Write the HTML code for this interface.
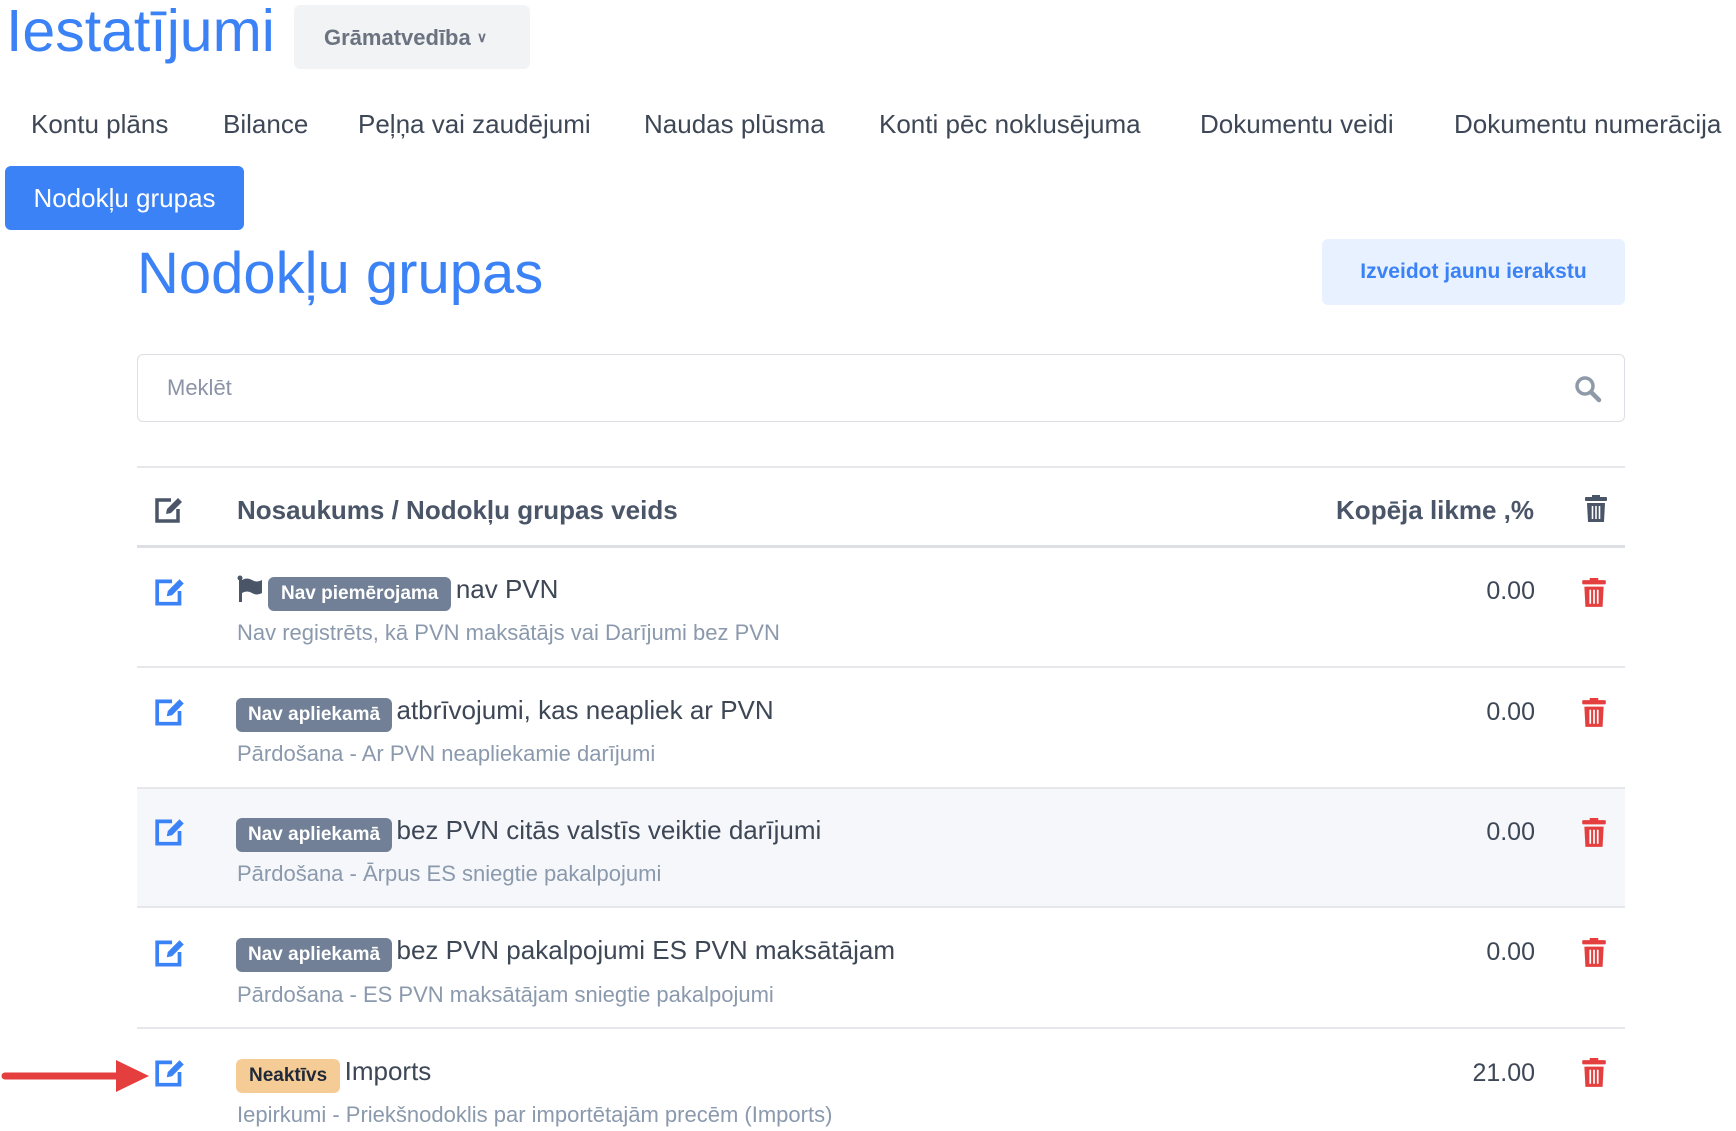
<!DOCTYPE html>
<html><head><meta charset="utf-8"><style>
*{margin:0;padding:0;box-sizing:border-box}
body{width:1736px;height:1131px;overflow:hidden;background:#fff;font-family:"Liberation Sans",sans-serif;color:#4a5568;position:relative}
.a{position:absolute;white-space:nowrap}
.nav{top:109px;font-size:26px;color:#3d4756}
.badge{display:inline-block;background:#718096;color:#fff;font-weight:bold;font-size:19px;border-radius:6px;padding:0 12px;height:34px;line-height:34px;vertical-align:middle}
.main{font-size:26px;color:#3d4756}
.sub{font-size:22px;color:#8b99ad}
.num{font-size:25px;color:#3d4756;right:201px;text-align:right}
.line{position:absolute;left:137px;width:1488px;height:2px;background:#e5e7eb}
</style></head><body>
<div class="a" style="left:6px;top:-3px;font-size:59px;color:#3b82f6">Iestatījumi</div>
<div class="a" style="left:294px;top:5px;width:236px;height:64px;background:#f1f3f5;border-radius:6px"></div>
<div class="a" style="left:324px;top:25px;font-size:22px;font-weight:bold;color:#6b7280">Grāmatvedība <span style="font-size:14px;position:relative;top:-3px">&#8744;</span></div>

<div class="a nav" style="left:31px">Kontu plāns</div>
<div class="a nav" style="left:223px">Bilance</div>
<div class="a nav" style="left:358px">Peļņa vai zaudējumi</div>
<div class="a nav" style="left:644px">Naudas plūsma</div>
<div class="a nav" style="left:879px">Konti pēc noklusējuma</div>
<div class="a nav" style="left:1200px">Dokumentu veidi</div>
<div class="a nav" style="left:1454px">Dokumentu numerācija</div>

<div class="a" style="left:5px;top:166px;width:239px;height:64px;background:#3b82f6;border-radius:6px;color:#fff;font-size:26px;line-height:64px;text-align:center">Nodokļu grupas</div>

<div class="a" style="left:137px;top:240px;font-size:58px;color:#3b82f6">Nodokļu grupas</div>
<div class="a" style="left:1322px;top:239px;width:303px;height:66px;background:#e8f1ff;border-radius:6px;color:#3b82f6;font-weight:bold;font-size:21px;line-height:66px;text-align:center">Izveidot jaunu ierakstu</div>

<div class="a" style="left:137px;top:354px;width:1488px;height:68px;border:1.5px solid #dcdfe3;border-radius:6px"></div>
<div class="a" style="left:167px;top:375px;font-size:22px;color:#8a94a6">Meklēt</div>
<svg class="a" style="left:1574px;top:375px" width="28" height="28" viewBox="0 0 28 28"><circle cx="11" cy="11" r="8" fill="none" stroke="#8f9aa8" stroke-width="3.5"/><line x1="17" y1="17" x2="25" y2="25" stroke="#8f9aa8" stroke-width="4.5" stroke-linecap="round"/></svg>

<div class="line" style="top:466px"></div>
<svg class="a" style="left:154px;top:496px" width="32" height="28" viewBox="0 0 32 28"><path d="M17 4H3v21h21V13" fill="none" stroke="#4a5568" stroke-width="3.5"/><path d="M12 18l1-5L24 2l4 4-11 11z" fill="#4a5568"/></svg>
<div class="a" style="left:237px;top:495px;font-size:26px;font-weight:bold;color:#4a5568">Nosaukums / Nodokļu grupas veids</div>
<div class="a" style="right:202px;top:495px;font-size:26px;font-weight:bold;color:#4a5568">Kopēja likme ,%</div>
<svg class="a" style="left:1584px;top:495px" width="24" height="28" viewBox="0 0 24 28"><rect x="1" y="2" width="22" height="4" rx="1" fill="#4a5568"/><rect x="8" y="0" width="8" height="3" fill="#4a5568"/><path d="M3 8h18l-1 19H4z" fill="#4a5568"/><path d="M8.5 11v13M12 11v13M15.5 11v13" stroke="#fff" stroke-width="1.6"/></svg>
<div class="line" style="top:545px;height:3px;background:#dcdfe3"></div>

<div class="a" style="left:137px;top:787px;width:1488px;height:120px;background:#f5f7fa"></div>
<div class="line" style="top:666px"></div>
<div class="line" style="top:787px"></div>
<div class="line" style="top:906px"></div>
<div class="line" style="top:1027px"></div>

<svg class="a" style="left:237px;top:575px" width="26" height="28" viewBox="0 0 26 28"><circle cx="3" cy="3" r="2.5" fill="#4a5568"/><rect x="2" y="3" width="3" height="24" fill="#4a5568"/><path d="M5 5q5-3 10 0t10 0v13q-5 3-10 0t-10 0z" fill="#4a5568"/></svg>
<div class="a" style="left:268px;top:574px"><span class="badge" style="padding:0 13px">Nav piemērojama</span> <span class="main">nav PVN</span></div>
<div class="a sub" style="left:237px;top:620px">Nav registrēts, kā PVN maksātājs vai Darījumi bez PVN</div>
<div class="a num" style="top:577px">0.00</div>

<div class="a" style="left:236px;top:695px"><span class="badge">Nav apliekamā</span> <span class="main">atbrīvojumi, kas neapliek ar PVN</span></div>
<div class="a sub" style="left:237px;top:741px">Pārdošana - Ar PVN neapliekamie darījumi</div>
<div class="a num" style="top:698px">0.00</div>

<div class="a" style="left:236px;top:815px"><span class="badge">Nav apliekamā</span> <span class="main">bez PVN citās valstīs veiktie darījumi</span></div>
<div class="a sub" style="left:237px;top:861px">Pārdošana - Ārpus ES sniegtie pakalpojumi</div>
<div class="a num" style="top:818px">0.00</div>

<div class="a" style="left:236px;top:935px"><span class="badge">Nav apliekamā</span> <span class="main">bez PVN pakalpojumi ES PVN maksātājam</span></div>
<div class="a sub" style="left:237px;top:982px">Pārdošana - ES PVN maksātājam sniegtie pakalpojumi</div>
<div class="a num" style="top:938px">0.00</div>

<div class="a" style="left:236px;top:1056px"><span class="badge" style="background:#f6cc96;color:#1f2937;padding:0 13px">Neaktīvs</span> <span class="main">Imports</span></div>
<div class="a sub" style="left:237px;top:1102px">Iepirkumi - Priekšnodoklis par importētajām precēm (Imports)</div>
<div class="a num" style="top:1059px">21.00</div>

<svg class="a" style="left:154px;top:577px" width="34" height="30" viewBox="0 0 32 28"><path d="M17 4H3v21h21V13" fill="none" stroke="#3b82f6" stroke-width="3.5"/><path d="M12 18l1-5L24 2l4 4-11 11z" fill="#3b82f6"/></svg>
<svg class="a" style="left:154px;top:697px" width="34" height="30" viewBox="0 0 32 28"><path d="M17 4H3v21h21V13" fill="none" stroke="#3b82f6" stroke-width="3.5"/><path d="M12 18l1-5L24 2l4 4-11 11z" fill="#3b82f6"/></svg>
<svg class="a" style="left:154px;top:817px" width="34" height="30" viewBox="0 0 32 28"><path d="M17 4H3v21h21V13" fill="none" stroke="#3b82f6" stroke-width="3.5"/><path d="M12 18l1-5L24 2l4 4-11 11z" fill="#3b82f6"/></svg>
<svg class="a" style="left:154px;top:938px" width="34" height="30" viewBox="0 0 32 28"><path d="M17 4H3v21h21V13" fill="none" stroke="#3b82f6" stroke-width="3.5"/><path d="M12 18l1-5L24 2l4 4-11 11z" fill="#3b82f6"/></svg>
<svg class="a" style="left:154px;top:1058px" width="34" height="30" viewBox="0 0 32 28"><path d="M17 4H3v21h21V13" fill="none" stroke="#3b82f6" stroke-width="3.5"/><path d="M12 18l1-5L24 2l4 4-11 11z" fill="#3b82f6"/></svg>

<svg class="a" style="left:1581px;top:578px" width="26" height="30" viewBox="0 0 24 28"><rect x="1" y="2" width="22" height="4" rx="1" fill="#e53e3e"/><rect x="8" y="0" width="8" height="3" fill="#e53e3e"/><path d="M3 8h18l-1 19H4z" fill="#e53e3e"/><path d="M8.5 11v13M12 11v13M15.5 11v13" stroke="#fff" stroke-width="1.6"/></svg>
<svg class="a" style="left:1581px;top:698px" width="26" height="30" viewBox="0 0 24 28"><rect x="1" y="2" width="22" height="4" rx="1" fill="#e53e3e"/><rect x="8" y="0" width="8" height="3" fill="#e53e3e"/><path d="M3 8h18l-1 19H4z" fill="#e53e3e"/><path d="M8.5 11v13M12 11v13M15.5 11v13" stroke="#fff" stroke-width="1.6"/></svg>
<svg class="a" style="left:1581px;top:818px" width="26" height="30" viewBox="0 0 24 28"><rect x="1" y="2" width="22" height="4" rx="1" fill="#e53e3e"/><rect x="8" y="0" width="8" height="3" fill="#e53e3e"/><path d="M3 8h18l-1 19H4z" fill="#e53e3e"/><path d="M8.5 11v13M12 11v13M15.5 11v13" stroke="#fff" stroke-width="1.6"/></svg>
<svg class="a" style="left:1581px;top:938px" width="26" height="30" viewBox="0 0 24 28"><rect x="1" y="2" width="22" height="4" rx="1" fill="#e53e3e"/><rect x="8" y="0" width="8" height="3" fill="#e53e3e"/><path d="M3 8h18l-1 19H4z" fill="#e53e3e"/><path d="M8.5 11v13M12 11v13M15.5 11v13" stroke="#fff" stroke-width="1.6"/></svg>
<svg class="a" style="left:1581px;top:1058px" width="26" height="30" viewBox="0 0 24 28"><rect x="1" y="2" width="22" height="4" rx="1" fill="#e53e3e"/><rect x="8" y="0" width="8" height="3" fill="#e53e3e"/><path d="M3 8h18l-1 19H4z" fill="#e53e3e"/><path d="M8.5 11v13M12 11v13M15.5 11v13" stroke="#fff" stroke-width="1.6"/></svg>

<svg class="a" style="left:0;top:1054px" width="152" height="44" viewBox="0 0 152 44"><line x1="5" y1="22" x2="122" y2="22" stroke="#e53e3e" stroke-width="7" stroke-linecap="round"/><path d="M116 6l33 16-33 16z" fill="#e53e3e"/></svg>
</body></html>
